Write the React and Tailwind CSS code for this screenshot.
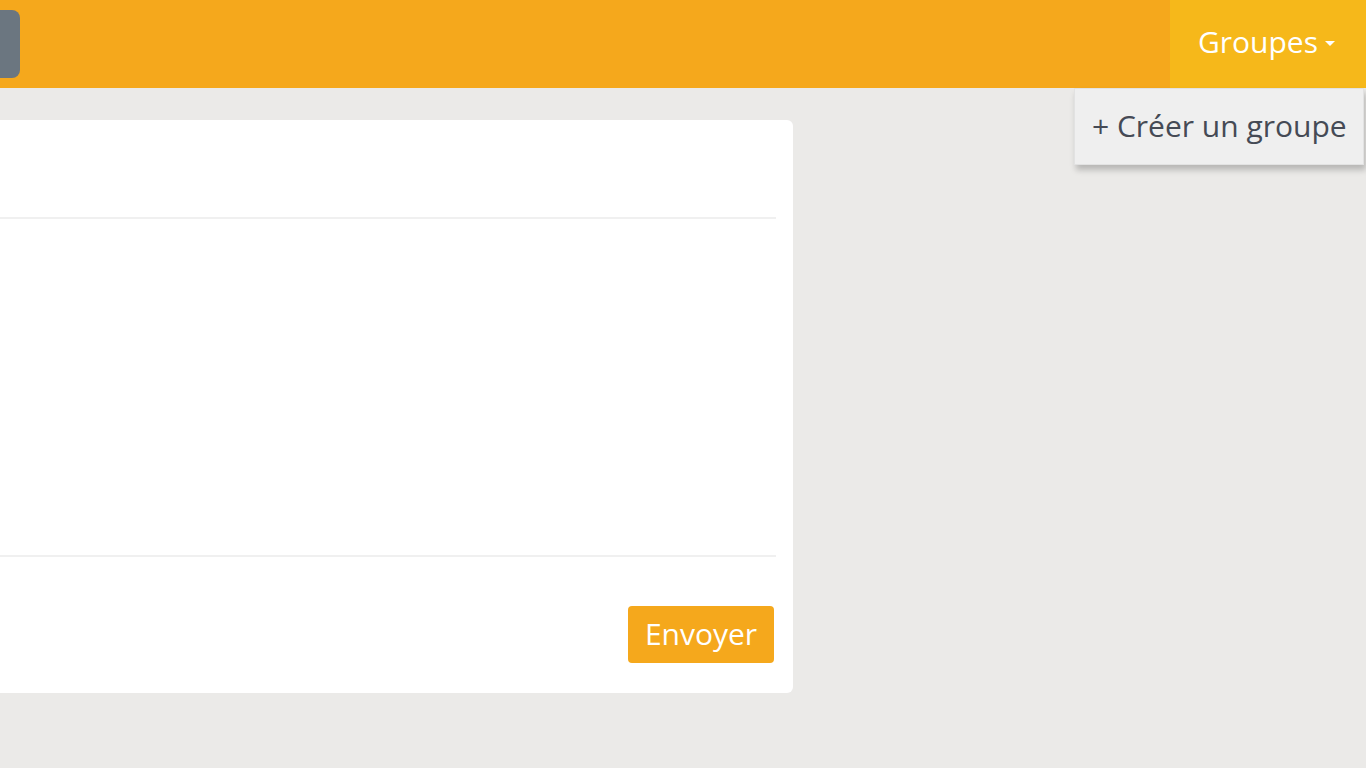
import { useState } from "react";

const font = { fontFamily: '"Open Sans", "Noto Sans", sans-serif' };

const Navbar = () => {
  const [open] = useState(true);
  return (
    <nav className="h-[88px] bg-[#f5a81c] flex items-stretch justify-between">
      <div className="flex items-center">
        <div className="w-[20px] h-[68px] bg-[#6b7680] rounded-r-lg" />
      </div>
      <div className="relative">
        <button className="h-full w-[196px] bg-[#f6b81a] text-white text-[30px] flex items-center justify-center gap-[7px] pb-[5px] pr-[3px]">
          <span>Groupes</span>
          <span className="w-0 h-0 border-l-[5px] border-r-[5px] border-t-[5px] border-l-transparent border-r-transparent border-t-white mt-[4px]" />
        </button>
        {open && (
          <div className="absolute right-[2px] top-[88px] w-[290px] h-[77px] bg-[#efefef] border border-[#e2e2e2] shadow-[2px_5px_6px_rgba(0,0,0,0.22)] flex items-center pl-[17px] pb-[2px] text-[#454a55] text-[30px] z-10">
            + Créer un groupe
          </div>
        )}
      </div>
    </nav>
  );
};

const App = () => {
  return (
    <div className="min-h-screen bg-[#ebeae8]" style={font}>
      <Navbar />
      <div className="pt-[32px]">
        <div className="w-[793px] h-[573px] bg-white rounded-r-md pr-[17px] flex flex-col">
          <div className="h-[99px] border-b-2 border-[#f0f0f0]" />
          <div className="h-[338px] border-b-2 border-[#f0f0f0]" />
          <div className="flex justify-end pt-[49px] pr-[2px]">
            <button className="w-[146px] h-[57px] bg-[#f5a81c] text-white text-[30px] rounded-sm pb-[2px]">
              Envoyer
            </button>
          </div>
        </div>
      </div>
    </div>
  );
};

export default App;
